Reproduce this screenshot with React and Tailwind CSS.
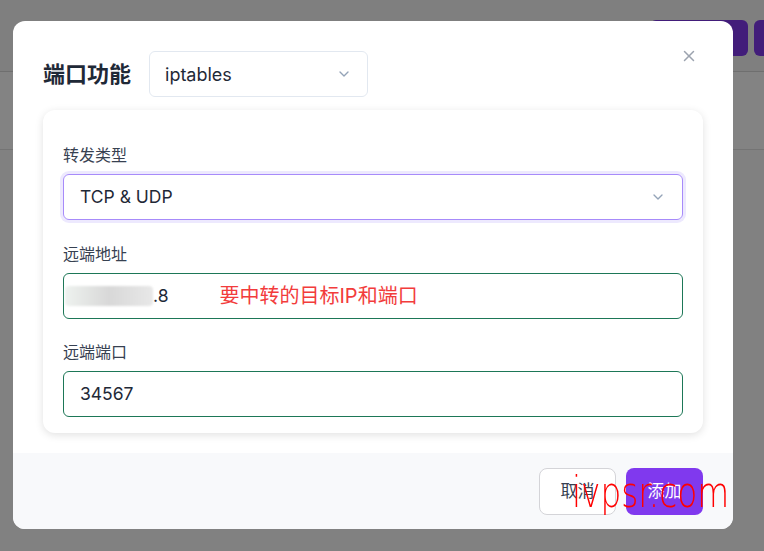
import { ChevronDown, X } from "lucide-react";

const cjk = { fontFamily: 'Inter, "Noto Sans CJK SC", sans-serif' };

function Field({ label, children, gap }) {
  return (
    <div className={gap}>
      <div className="mb-[7px] h-6 text-[16px] leading-6 text-[#374151]">{label}</div>
      {children}
    </div>
  );
}

export default function App() {
  return (
    <div className="relative h-[551px] w-full overflow-hidden bg-[#818181]" style={cjk}>
      {/* page behind the overlay */}
      <div className="flex h-[72px] items-start gap-[6px] border-b border-[#6f6f6f] bg-[#7f7f7f] pl-[650px] pt-[20px]">
        <div className="h-[36px] w-[98px] shrink-0 rounded-md bg-[#421d7a]" />
        <div className="h-[36px] w-[30px] shrink-0 rounded-md bg-[#421d7a]" />
      </div>
      <div className="h-[78px] border-b border-[#747474] bg-[#838383]" />

      <div className="absolute inset-0 pl-[13px] pt-[21px]">
        <div className="relative flex h-[508px] w-[720px] flex-col overflow-hidden rounded-xl bg-white">
          <button className="absolute right-[35px] top-[26px] text-[#9ca3af]">
            <X size={18} strokeWidth={2} />
          </button>

          <div className="flex items-center gap-[18px] px-[30px] pt-[30px]">
            <h2 className="text-[22px] font-bold text-[#1f2937]">端口功能</h2>
            <div className="flex h-[46px] w-[219px] items-center justify-between rounded-md border border-[#e2e8f0] pl-[15px] pr-[15px] text-[18px] text-[#1f2937]">
              <span>iptables</span>
              <ChevronDown size={16} className="text-[#94a3b8]" />
            </div>
          </div>

          <div className="mx-[30px] mt-[13px] rounded-xl bg-white px-5 pb-4 pt-[33px] shadow-[0_2px_8px_rgba(0,0,0,0.12)]">
            <Field label="转发类型">
              <div className="flex h-[46px] items-center justify-between rounded-md border border-[#a78bfa] pl-4 pr-4 text-[17.5px] text-[#1f2937] ring-[3px] ring-[#ede9fe]">
                <span>TCP &amp; UDP</span>
                <ChevronDown size={16} className="text-[#94a3b8]" />
              </div>
            </Field>
            <Field label="远端地址" gap="mt-[22px]">
              <div className="flex h-[46px] items-center rounded-md border border-[#1d7757] text-[17.5px] text-[#1f2937]">
                <span className="ml-[1px] h-[20px] w-[88px] rounded-sm bg-gradient-to-r from-[#eef2ef] via-[#d8d8d8] to-[#e8e8e8] blur-[1px]" />
                <span>.8</span>
                <span className="ml-[51px] text-[20px] text-[#f23c3c]">要中转的目标IP和端口</span>
              </div>
            </Field>
            <Field label="远端端口" gap="mt-[21px]">
              <div className="flex h-[46px] items-center rounded-md border border-[#1d7757] pl-4 text-[17.5px] text-[#1f2937]">
                34567
              </div>
            </Field>
          </div>

          <div className="mt-5 flex flex-1 items-start justify-end gap-[10px] bg-[#f8f9fb] pr-[30px] pt-[15px]">
            <button className="h-[47px] w-[77px] rounded-lg border border-[#d4d4d8] bg-white text-[17px] text-[#374151]">取消</button>
            <button className="h-[47px] w-[77px] rounded-lg bg-[#8039ee] text-[17px] text-white">添加</button>
          </div>
        </div>
      </div>

      <div
        className="pointer-events-none absolute left-[572px] top-[472px] origin-left scale-x-[0.78] text-[42px] font-extralight leading-none text-[#ff0000]"
        style={{ fontFamily: '"DejaVu Sans", sans-serif' }}
      >
        ivpsr.com
      </div>
    </div>
  );
}
